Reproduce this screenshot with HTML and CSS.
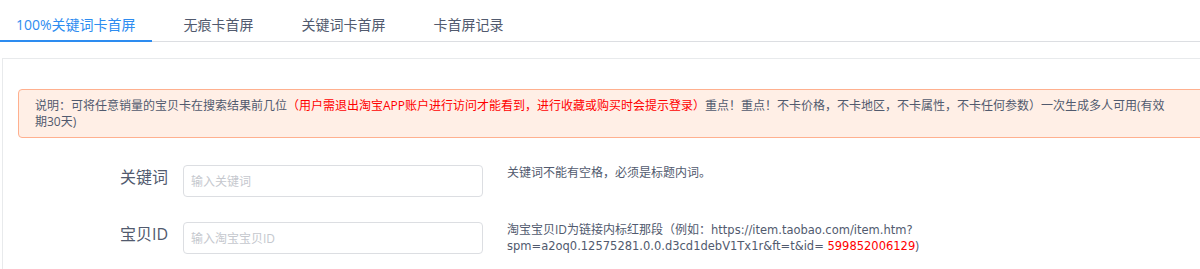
FILE: index.html
```html
<!DOCTYPE html>
<html lang="zh-CN">
<head>
<meta charset="utf-8">
<title>卡首屏</title>
<link rel="stylesheet" href="styles.css">
</head>
<body>
<div class="page">
  <div class="tabs">
    <div class="tab active">100%关键词卡首屏</div>
    <div class="tab">无痕卡首屏</div>
    <div class="tab">关键词卡首屏</div>
    <div class="tab">卡首屏记录</div>
  </div>
  <div class="panel">
    <div class="alert">说明：可将任意销量的宝贝卡在搜索结果前几位<span class="red">（用户需退出淘宝APP账户进行访问才能看到，进行收藏或购买时会提示登录）</span>重点！重点！不卡价格，不卡地区，不卡属性，不卡任何参数）一次生成多人可用(有效期30天)</div>
    <div class="form-row">
      <label class="label">关键词</label>
      <input class="input" type="text" placeholder="输入关键词">
      <div class="help">关键词不能有空格，必须是标题内词。</div>
    </div>
    <div class="form-row">
      <label class="label">宝贝ID</label>
      <input class="input" type="text" placeholder="输入淘宝宝贝ID">
      <div class="help">淘宝宝贝ID为链接内标红那段（例如：<span class="url">https://item.taobao.com/item.htm?</span><br><span class="url">spm=a2oq0.12575281.0.0.d3cd1debV1Tx1r&amp;ft=t&amp;id= <span class="red">599852006129</span></span>)</div>
    </div>
  </div>
</div>
</body>
</html>
```

FILE: styles.css
```css
html, body {
  margin: 0;
  padding: 0;
  background: #fff;
  overflow: hidden;
}

body {
  font-family: "Open Sans", "Noto Sans CJK SC", sans-serif;
  color: #515a6e;
  font-size: 12px;
}

.page {
  width: 1240px;
}

.tabs {
  display: flex;
  height: 41px;
  border-bottom: 1px solid #dcdee2;
}

.tab {
  position: relative;
  padding: 14px 16px 6px;
  margin-right: 16px;
  font-size: 14px;
  line-height: 21px;
  color: #515a6e;
  white-space: nowrap;
}

.tab.active {
  color: #2d8cf0;
}

.tab.active::after {
  content: "";
  position: absolute;
  left: 0;
  right: 0;
  bottom: -1px;
  height: 2px;
  background: #2d8cf0;
}

.panel {
  margin: 16px 0 0 2px;
  border: 1px solid #e8eaec;
  padding: 30px 15px 10px;
}

.alert {
  border: 1px solid #ffb08f;
  background: #ffefe6;
  border-radius: 4px;
  padding: 8px 52px 8px 16px;
  line-height: 15.5px;
  font-size: 12px;
  color: #515a6e;
  margin-bottom: 27px;
}

.red {
  color: #ff0000;
}

.form-row {
  display: flex;
  align-items: flex-start;
  margin-bottom: 25px;
}

.label {
  width: 165px;
  box-sizing: border-box;
  padding: 4px 15px 0 0;
  text-align: right;
  font-size: 16px;
  line-height: 16px;
  color: #515a6e;
}

.input {
  width: 300px;
  height: 32px;
  box-sizing: border-box;
  margin: 0;
  border: 1px solid #dcdee2;
  border-radius: 4px;
  padding: 4px 7px;
  font-family: "Open Sans", "Noto Sans CJK SC", sans-serif;
  font-size: 12px;
  color: #515a6e;
  background: #fff;
  outline: none;
}

.input::placeholder {
  color: #c5c8ce;
}

.help {
  margin-left: 24px;
  font-size: 12px;
  line-height: 16px;
  color: #515a6e;
  white-space: nowrap;
}

.url {
  font-family: "DejaVu Sans", sans-serif;
  font-size: 11.5px;
}
```
